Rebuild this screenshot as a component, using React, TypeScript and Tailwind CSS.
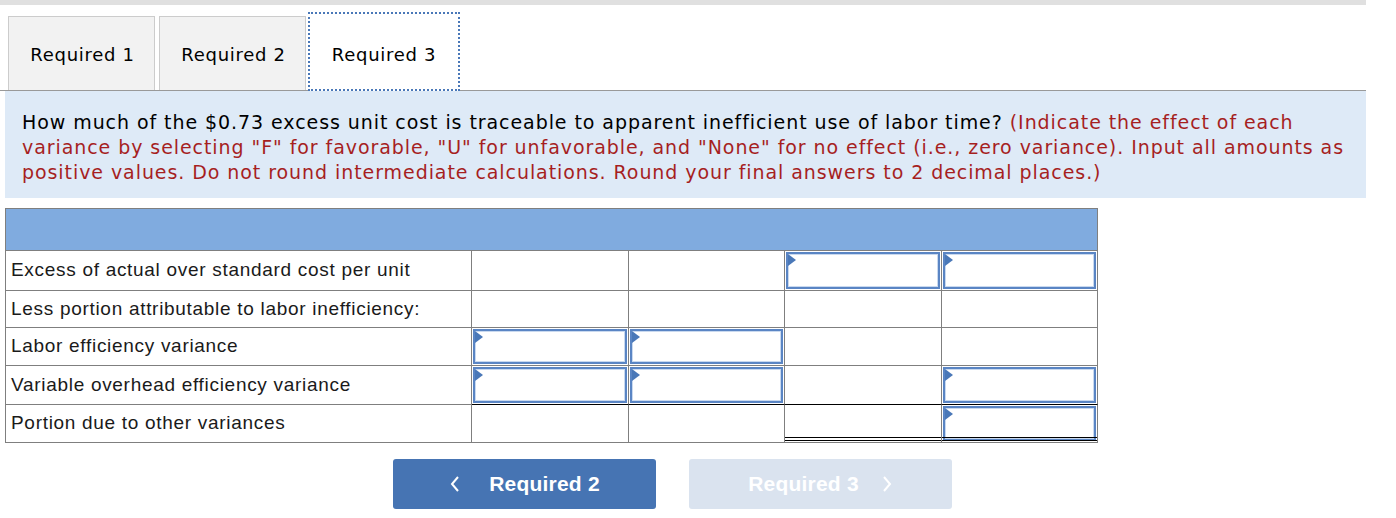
import React from "react";

const Tri = () => (
  <svg className="absolute left-0 top-0" width="8" height="12" viewBox="0 0 8 12">
    <polygon points="0,0 8,6 0,12" fill="#4a78b8" />
  </svg>
);

const InputBox = () => (
  <div className="absolute inset-[1px] border-2 border-[#5a85c4] bg-white shadow-[inset_0_0_0_1px_#c9d9ef]">
    <Tri />
  </div>
);

type CellProps = { input?: boolean; black?: boolean; dbl?: boolean };

const Cell = ({ input, black, dbl }: CellProps) => (
  <div
    className={
      "relative border-b border-r border-r-[#7f7f7f] " + (black ? "border-b-black" : "border-b-[#7f7f7f]")
    }
  >
    {input && <InputBox />}
    {dbl && <div className="absolute left-0 right-0 bottom-[1px] h-[4px] border-t border-b border-black" />}
  </div>
);

const rows: { label: string; h: string; cells: CellProps[] }[] = [
  { label: "Excess of actual over standard cost per unit", h: "h-[40px]", cells: [{}, {}, { input: true }, { input: true }] },
  { label: "Less portion attributable to labor inefficiency:", h: "h-[37px]", cells: [{}, {}, {}, {}] },
  { label: "Labor efficiency variance", h: "h-[38px]", cells: [{ input: true }, { input: true }, {}, {}] },
  {
    label: "Variable overhead efficiency variance",
    h: "h-[39px]",
    cells: [{ input: true, black: true }, { input: true, black: true }, { black: true }, { input: true, black: true }],
  },
  { label: "Portion due to other variances", h: "h-[38px]", cells: [{}, {}, { dbl: true }, { input: true, dbl: true }] },
];

const verdana = { fontFamily: "'DejaVu Sans', Verdana, sans-serif" };

export default function App() {
  return (
    <div className="w-[1396px] h-[518px] bg-white overflow-hidden relative">
      <div className="h-[5px] w-[1366px] bg-[#e0e0e0]" />
      {/* tabs */}
      <div className="mt-[11px] w-[1366px] flex items-end border-b border-[#999999] pl-[8px] h-[75px]">
        <div
          className="w-[147px] h-[74px] bg-[#f2f2f2] border border-[#cccccc] border-b-0 flex items-center justify-center text-[18px] text-black pt-[2px] pl-[2px]"
          style={verdana}
        >
          <span className="tracking-[0.7px]">Required 1</span>
        </div>
        <div
          className="ml-[4px] w-[147px] h-[74px] bg-[#f2f2f2] border border-[#cccccc] border-b-0 flex items-center justify-center text-[18px] text-black pt-[2px] pl-[2px]"
          style={verdana}
        >
          <span className="tracking-[0.7px]">Required 2</span>
        </div>
        <div
          className="ml-[2px] w-[152px] h-[79px] -mb-[1px] bg-white border-[2px] border-dotted border-[#4a78b8] flex items-center justify-center text-[18px] text-black pt-[6px]"
          style={verdana}
        >
          <span className="tracking-[0.7px]">Required 3</span>
        </div>
      </div>
      {/* question */}
      <div
        className="ml-[5px] w-[1361px] h-[107px] bg-[#deeaf7] pl-[17px] pr-[8px] pt-[19px] text-[19px] leading-[25px] tracking-[0.93px]"
        style={verdana}
      >
        <span className="text-black">
          How much of the $0.73 excess unit cost is traceable to apparent inefficient use of labor time?{" "}
        </span>
        <span className="text-[#a61f1f]">
          (Indicate the effect of each variance by selecting "F" for favorable, "U" for unfavorable, and "None" for no
          effect (i.e., zero variance). Input all amounts as positive values. Do not round intermediate calculations.
          Round your final answers to 2 decimal places.)
        </span>
      </div>
      {/* table */}
      <div
        className="mt-[10px] ml-[5px] w-[1093px] border-l border-t border-[#7f7f7f]"
        style={{ fontFamily: "'Liberation Sans', Arial, sans-serif" }}
      >
        <div className="h-[42px] bg-[#80abdf] border-r border-b border-[#7f7f7f]" />
        {rows.map((r, i) => (
          <div key={i} className={"grid grid-cols-[466px_157px_156px_157px_156px] " + r.h}>
            <div className="border-r border-b border-[#7f7f7f] flex items-center pl-[5px] text-[19px] tracking-[0.7px] text-[#1a1a1a]">
              {r.label}
            </div>
            {r.cells.map((c, j) => (
              <Cell key={j} {...c} />
            ))}
          </div>
        ))}
      </div>
      {/* buttons */}
      <div className="mt-[16px] flex ml-[393px] gap-[33px]" style={{ fontFamily: "'Liberation Sans', Arial, sans-serif" }}>
        <div className="w-[263px] h-[50px] rounded-[3px] bg-[#4674b3] flex items-center justify-center text-white text-[21px] font-bold tracking-[0.2px]">
          <svg width="12" height="18" viewBox="0 0 12 18" className="mr-[28px]">
            <polyline points="9,2 3,9 9,16" fill="none" stroke="white" strokeWidth="2" />
          </svg>
          <span>Required 2</span>
        </div>
        <div className="w-[263px] h-[50px] rounded-[3px] bg-[#dae3ef] flex items-center justify-center text-white text-[21px] font-bold tracking-[0.2px]">
          <span>Required 3</span>
          <svg width="12" height="18" viewBox="0 0 12 18" className="ml-[22px]">
            <polyline points="3,2 9,9 3,16" fill="none" stroke="white" strokeWidth="2" />
          </svg>
        </div>
      </div>
    </div>
  );
}
